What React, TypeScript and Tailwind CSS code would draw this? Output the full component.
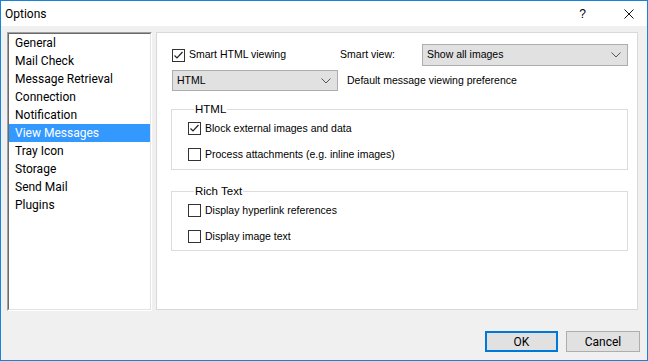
import React from "react";

const Check = ({ checked }: { checked?: boolean }) => (
  <span className="w-[13px] h-[13px] border border-[#333333] bg-white flex items-center justify-center shrink-0">
    {checked && (
      <svg width="11" height="11" viewBox="0 0 11 11">
        <polyline points="1.5,5.5 4,8 9.5,2" fill="none" stroke="#222" strokeWidth="1.2" />
      </svg>
    )}
  </span>
);

const Chevron = () => (
  <svg width="10" height="6" viewBox="0 0 10 6" className="shrink-0">
    <polyline points="0.5,0.5 5,5 9.5,0.5" fill="none" stroke="#555" strokeWidth="1" />
  </svg>
);

const items = [
  "General",
  "Mail Check",
  "Message Retrieval",
  "Connection",
  "Notification",
  "View Messages",
  "Tray Icon",
  "Storage",
  "Send Mail",
  "Plugins",
];

const App = () => {
  return (
    <div className="w-[648px] h-[361px] border border-[#1883d7] flex flex-col bg-[#f0f0f0] font-['Liberation_Sans',Arial,sans-serif] text-black overflow-hidden">
      {/* title bar */}
      <div className="h-[25px] bg-white flex items-center pl-[4px] pr-[13px] shrink-0">
        <span className="text-[12px] font-['Roboto',sans-serif]">Options</span>
        <span className="ml-auto text-[12px] mr-[38px]">?</span>
        <svg width="10" height="10" viewBox="0 0 10 10">
          <path d="M0.5 0.5 L9.5 9.5 M9.5 0.5 L0.5 9.5" stroke="#111" strokeWidth="1" />
        </svg>
      </div>

      <div className="flex pl-[6px] pt-[6px] gap-[4px]">
        {/* list */}
        <div className="w-[145px] h-[279px] border border-t-[#a0a0a0] border-l-[#a0a0a0] border-r-white border-b-white">
          <div className="w-full h-full border border-t-[#696969] border-l-[#696969] border-r-[#e3e3e3] border-b-[#e3e3e3] bg-white font-['Roboto',sans-serif]">
            {items.map((it) => (
              <div
                key={it}
                className={
                  "h-[18px] flex items-center pl-[6px] text-[12px] " +
                  (it === "View Messages" ? "bg-[#3399ff] text-white" : "")
                }
              >
                {it}
              </div>
            ))}
          </div>
        </div>

        {/* panel */}
        <div className="w-[482px] h-[278px] border border-[#d9d9d9] bg-white pl-[15px] pt-[11px] text-[10.5px]">
          <div className="flex items-center h-[22px]">
            <Check checked />
            <span className="ml-[4px]">Smart HTML viewing</span>
            <span className="ml-[54px]">Smart view:</span>
            <div className="ml-auto mr-[9px] w-[206px] h-[22px] border border-[#adadad] bg-[#e1e1e1] flex items-center pl-[4px] pr-[6px]">
              <span className="flex-1">Show all images</span>
              <Chevron />
            </div>
          </div>
          <div className="flex items-center mt-[4px] h-[21px]">
            <div className="w-[166px] h-[21px] border border-[#adadad] bg-[#e1e1e1] flex items-center pl-[4px] pr-[6px]">
              <span className="flex-1">HTML</span>
              <Chevron />
            </div>
            <span className="ml-[9px]">Default message viewing preference</span>
          </div>

          <fieldset className="mt-[11px] -ml-[1px] w-[457px] h-[68px] border border-[#dcdcdc] pl-[16px]">
            <legend className="ml-[6px] px-[1px] text-[11.5px] leading-[14px]">HTML</legend>
            <div className="flex items-center h-[13px] mt-[6px]">
              <Check checked />
              <span className="ml-[4px]">Block external images and data</span>
            </div>
            <div className="flex items-center h-[13px] mt-[13px]">
              <Check />
              <span className="ml-[4px]">Process attachments (e.g. inline images)</span>
            </div>
          </fieldset>

          <fieldset className="mt-[14px] -ml-[1px] w-[457px] h-[67px] border border-[#dcdcdc] pl-[16px]">
            <legend className="ml-[6px] px-[1px] text-[11.5px] leading-[14px]">Rich Text</legend>
            <div className="flex items-center h-[13px] mt-[6px]">
              <Check />
              <span className="ml-[4px]">Display hyperlink references</span>
            </div>
            <div className="flex items-center h-[13px] mt-[13px]">
              <Check />
              <span className="ml-[4px]">Display image text</span>
            </div>
          </fieldset>
        </div>
      </div>

      {/* buttons */}
      <div className="flex justify-end gap-[8px] pr-[7px] mt-[20px] text-[12px] font-['Roboto',sans-serif]">
        <button className="w-[73px] h-[21px] border-2 border-[#0078d7] bg-[#e1e1e1] flex items-center justify-center">
          OK
        </button>
        <button className="w-[74px] h-[21px] border border-[#adadad] bg-[#e1e1e1] flex items-center justify-center">
          Cancel
        </button>
      </div>
    </div>
  );
};

export default App;
